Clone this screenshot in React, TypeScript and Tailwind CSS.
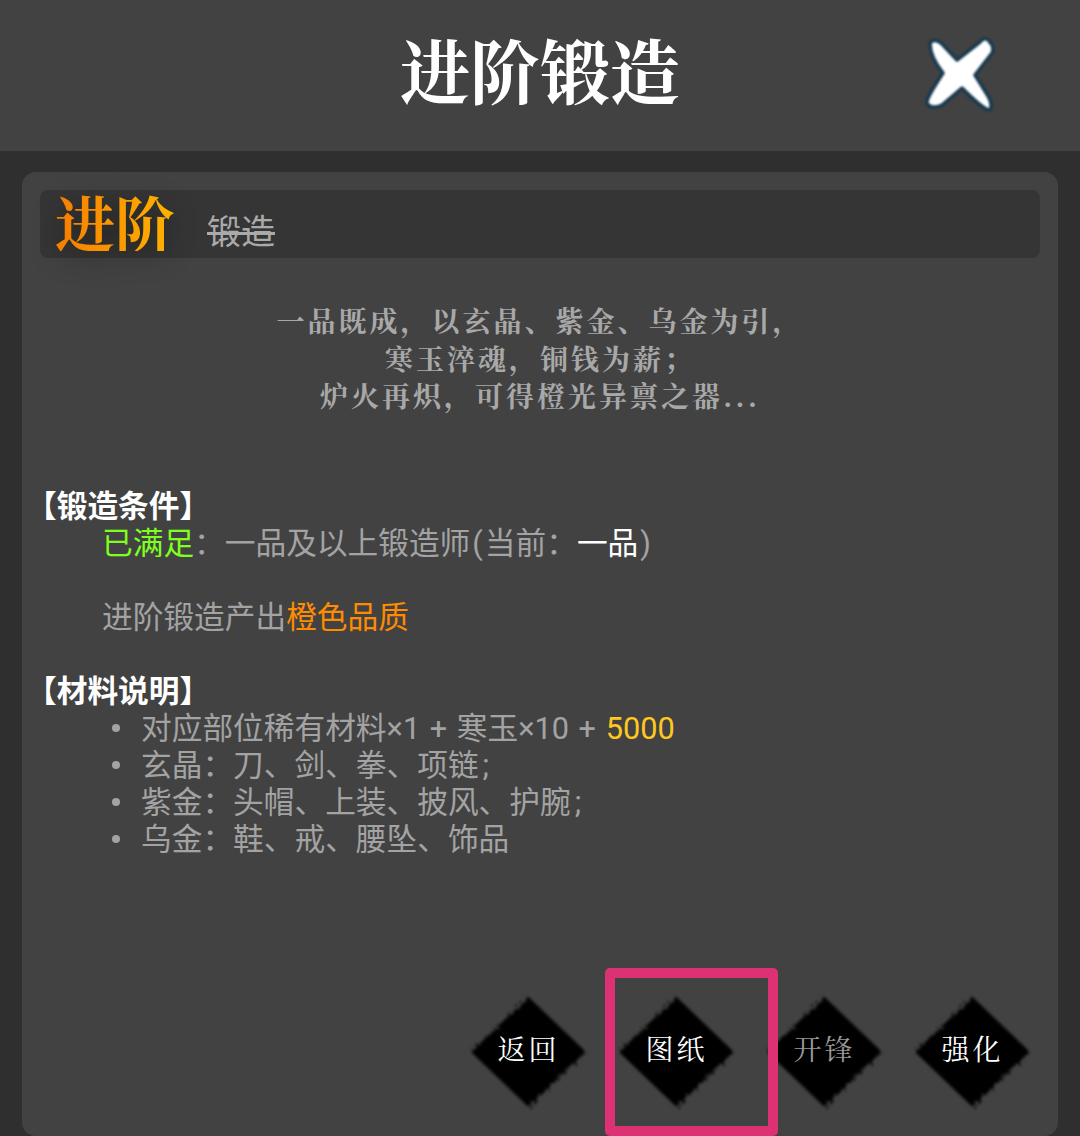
const SANS = "font-['Roboto','Noto_Sans_CJK_SC',sans-serif]";

function InkButton({label, dim}: {label: string; dim?: boolean}) {
    return (
        <div className="relative w-[115px] h-[110px] flex items-center justify-center">
            <svg viewBox="0 0 115 110" className="absolute inset-0 w-full h-full overflow-visible">
                <defs>
                    <filter id="ink" x="-15%" y="-15%" width="130%" height="130%">
                        <feTurbulence type="fractalNoise" baseFrequency="0.3" numOctaves="3" seed="4" />
                        <feDisplacementMap in="SourceGraphic" scale="8" />
                        <feGaussianBlur stdDeviation="1.7" />
                    </filter>
                </defs>
                <polygon points="57.5,0 115,55 57.5,110 0,55" fill="#000000" filter="url(#ink)" />
            </svg>
            <span className={`relative -mt-[9px] text-[28px] leading-none tracking-[3px] font-['Noto_Serif_CJK_SC',serif] ${dim ? "text-[#9a9a9a]" : "text-white"}`}>{label}</span>
        </div>
    );
}

function CloseIcon() {
    return (
        <svg viewBox="0 0 80 90" className="w-[80px] h-[90px] blur-[1px]">
            <path
                d="M10 13 C13 9 18 10 22 14 L37 30 L60 12 C63 8 67 8 69 11 C72 14 74 19 72 23 L55 45 L68 66 C71 71 72 77 70 80 C66 80 60 76 42 58 L22 75 C15 78 9 78 7 73 C6 69 12 60 23 43 C15 33 10 24 10 13 Z"
                fill="#ffffff"
                stroke="#17394f"
                strokeWidth="3.5"
                strokeLinejoin="round"
            />
        </svg>
    );
}

function App() {
    return (
        <div className={`relative w-[1080px] h-[1136px] overflow-hidden bg-[#2f2f2f] flex flex-col ${SANS}`}>
            <header className="h-[151px] shrink-0 bg-[#424242] flex items-center justify-center relative">
                <h1 className="text-[70px] leading-none font-bold text-white -mt-[13px] font-['Noto_Serif_CJK_SC','Noto_Sans_CJK_SC',serif]">进阶锻造</h1>
                <div className="absolute right-[80px] top-[30px]">
                    <CloseIcon />
                </div>
            </header>
            <main className="flex-1 px-[22px] pt-[21px]">
                <div className="h-full bg-[#424242] rounded-[14px] px-[18px] pt-[18px] flex flex-col">
                    <div className="h-[68px] bg-[#353535] rounded-[8px] flex items-start pl-[15px]">
                        <span className="text-[60px] leading-[60px] font-bold mt-[1px] text-transparent bg-clip-text bg-gradient-to-r from-[#f57c00] to-[#ffb300] drop-shadow-[0_6px_14px_rgba(0,0,0,0.4)] font-['Noto_Serif_CJK_SC','Noto_Sans_CJK_SC',serif]">进阶</span>
                        <span className="ml-[32px] mt-[23px] text-[34px] leading-[38px] text-[#aaaaaa] line-through">锻造</span>
                    </div>
                    <div className="mt-[44px] text-center text-[28px] leading-[37.5px] font-bold text-[#a8a8a8] tracking-[3px] font-['Noto_Serif_CJK_SC','Noto_Sans_CJK_SC',serif]">
                        <p>一品既成，以玄晶、紫金、乌金为引，</p>
                        <p>寒玉淬魂，铜钱为薪；</p>
                        <p>炉火再炽，可得橙光异禀之器...</p>
                    </div>
                    <div className="mt-[73px] text-[30.7px] leading-[37px] text-[#a3a3a3]">
                        <p className="font-bold text-white -ml-[14px]">【锻造条件】</p>
                        <p className="pl-[62px]">
                            <span className="text-[#7fff1f]">已满足</span>：一品及以上锻造师<span className="mx-[2px]">(</span>当前：<span className="text-white">一品</span><span className="ml-[2px]">)</span>
                        </p>
                        <p className="h-[37px]" />
                        <p className="pl-[62px]">
                            进阶锻造产出<span className="text-[#ff8c00]">橙色品质</span>
                        </p>
                        <p className="h-[37px]" />
                        <p className="font-bold text-white -ml-[14px]">【材料说明】</p>
                        <ul className="pl-[62px]">
                            <li className="flex items-center">
                                <span className="w-[8px] h-[8px] ml-[10px] mr-[21px] rounded-full bg-[#a3a3a3]" />
                                <span className="[word-spacing:2px]">
                                    对应部位稀有材料×1 + 寒玉×10 + <span className="text-[#ffc81e]">5000</span>
                                </span>
                            </li>
                            <li className="flex items-center">
                                <span className="w-[8px] h-[8px] ml-[10px] mr-[21px] rounded-full bg-[#a3a3a3]" />
                                <span>玄晶：刀、剑、拳、项链<span className="ml-[4px]">;</span></span>
                            </li>
                            <li className="flex items-center">
                                <span className="w-[8px] h-[8px] ml-[10px] mr-[21px] rounded-full bg-[#a3a3a3]" />
                                <span>紫金：头帽、上装、披风、护腕<span className="ml-[4px]">;</span></span>
                            </li>
                            <li className="flex items-center">
                                <span className="w-[8px] h-[8px] ml-[10px] mr-[21px] rounded-full bg-[#a3a3a3]" />
                                <span>乌金：鞋、戒、腰坠、饰品</span>
                            </li>
                        </ul>
                    </div>
                    <div className="mt-auto mb-[29px] flex justify-end gap-[33px] pr-[10px]">
                        <InkButton label="返回" />
                        <InkButton label="图纸" />
                        <InkButton label="开锋" dim />
                        <InkButton label="强化" />
                    </div>
                </div>
            </main>
            {/* 강조 표시 */}
            <div className="absolute left-[605px] top-[968px] w-[173px] h-[168px] border-[10px] border-[#dc3274] rounded-[5px]" />
        </div>
    );
}

export default App;
